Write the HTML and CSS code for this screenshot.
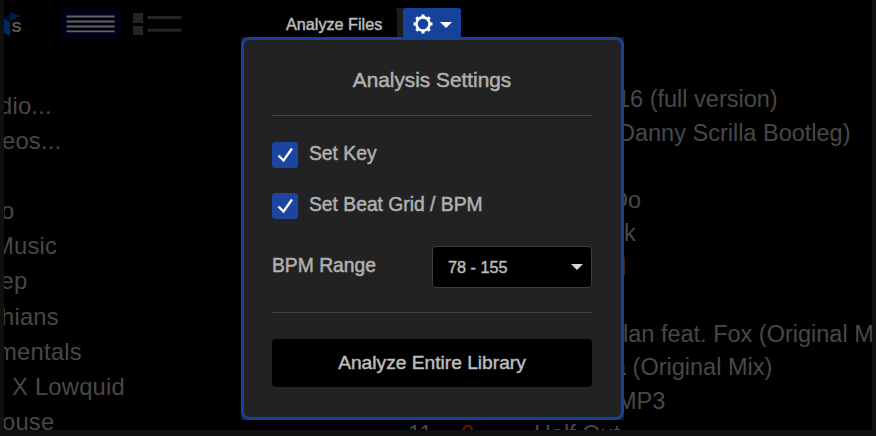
FILE: index.html
```
<!DOCTYPE html>
<html lang="en">
<head>
    <meta charset="UTF-8">
    <meta name="viewport" content="width=device-width, initial-scale=1.0">
    <title>Analysis Settings</title>
    <link rel="stylesheet" href="styles.css">
</head>
<body>
    <div class="screen">
        <div class="library">
            <div class="sidebar">
                <div class="view-bar">
                    <svg class="logo" width="17" height="26" viewBox="0 0 17 26">
                        <path d="M0 7L6 10V24L0 21Z" fill="#002a5e"/>
                        <path d="M0 5L6 3V9L0 6.500Z" fill="#000f28"/>
                        <path d="M6 0L16 4L11 7L6 9Z" fill="#001d48"/>
                        <text x="7.5" y="20" class="logo-text">S</text>
                    </svg>
                    <svg class="view-list" width="61" height="32" viewBox="0 0 61 32">
                        <rect width="61" height="32" rx="2" fill="#000015"/>
                        <path d="M6.500 8.500h48M6.500 13.500h48M6.500 18.500h48M6.500 23.300h48" stroke="#65655f" stroke-width="1.800"/>
                    </svg>
                    <svg class="view-detail" width="49" height="24" viewBox="0 0 49 24">
                        <path d="M0 1h10v10H0zM0 14h10v9H0z" fill="#242424"/>
                        <path d="M14.500 5.500h34M14.500 18.300h34" stroke="#242424" stroke-width="3"/>
                    </svg>
                </div>
                <ul class="folders">
                    <li class="audio">dio...</li>
                    <li class="videos">eos...</li>
                    <li></li>
                    <li class="folder-o">o</li>
                    <li class="music">Music</li>
                    <li class="folder-ep">ep</li>
                    <li class="hians">hians</li>
                    <li class="mentals">mentals</li>
                    <li class="lowquid">X Lowquid</li>
                    <li class="house">ouse</li>
                </ul>
            </div>
            <ul class="tracks">
                <li class="full">16 (full version)</li>
                <li class="danny">Danny Scrilla Bootleg)</li>
                <li></li>
                <li class="do">Do</li>
                <li class="track-k">k</li>
                <li class="track-d">d</li>
                <li></li>
                <li class="fox">lan feat. Fox (Original M</li>
                <li class="mix">a (Original Mix)</li>
                <li class="mp3">MP3</li>
                <li class="half"><span class="count">11</span><span class="key">8</span><span>Half Out</span></li>
            </ul>
        </div>

        <div class="analyze">
            <div class="tabs">
                <div class="tab-files">Analyze Files</div>
                <div class="tab-settings">
                    <svg width="20" height="20" viewBox="0 0 20 20">
                        <circle cx="10" cy="10" r="6.600" fill="none" stroke="#fff" stroke-width="2.600"/>
                        <path d="M10 .5v3M10 16.500v3M.5 10h3M16.500 10h3M3.300 3.300l2.100 2.100M14.600 14.600l2.100 2.100M16.700 3.300l-2.100 2.100M5.400 14.600l-2.100 2.100" stroke="#fff" stroke-width="3"/>
                    </svg>
                    <span class="arrow"></span>
                </div>
            </div>
            <div class="popover">
                <div class="panel">
                    <h2>Analysis Settings</h2>
                    <div class="check-row">
                        <svg class="check" width="26" height="26" viewBox="0 0 26 26"><path d="M6.500 13.500l5 5L20 6.500" fill="none" stroke="#fff" stroke-width="2.300"/></svg>
                        <span>Set Key</span>
                    </div>
                    <div class="check-row">
                        <svg class="check" width="26" height="26" viewBox="0 0 26 26"><path d="M6.500 13.500l5 5L20 6.500" fill="none" stroke="#fff" stroke-width="2.300"/></svg>
                        <span>Set Beat Grid / BPM</span>
                    </div>
                    <div class="range-row">
                        <span class="range-label">BPM Range</span>
                        <div class="select"><span>78 - 155</span><span class="arrow"></span></div>
                    </div>
                    <div class="analyze-button">Analyze Entire Library</div>
                </div>
            </div>
        </div>
    </div>
</body>
</html>
```
FILE: styles.css
```
* {
    box-sizing: border-box;
}
body {
    margin: 0;
    height: 436px;
    padding: 0 4px 6px;
    background: #101010;
    font-family: "Liberation Sans", Arial, sans-serif;
    overflow: hidden;
}
.screen {
    position: relative;
    height: 430px;
    background: #000;
    overflow: hidden;
}
.library {
    display: flex;
    height: 430px;
    color: #484848;
}
.sidebar {
    flex: none;
    width: 237px;
    overflow: hidden;
}
.view-bar {
    display: flex;
    align-items: flex-start;
    height: 88px;
    padding-top: 8px;
}
.logo {
    margin-top: 4px;
}
.logo-text {
    font-size: 15px;
    font-weight: bold;
    fill: #555e60;
}
.view-list {
    margin-left: 39px;
}
.view-detail {
    margin: 4px 0 0 12px;
}
ul {
    margin: 0;
    padding: 0;
    list-style: none;
    white-space: nowrap;
}
.folders {
    font-size: 23.8px;
    letter-spacing: 0.2px;
}
.folders li {
    height: 35.1px;
    line-height: 35.1px;
}
.audio { margin-left: -5px; }
.videos { margin-left: -2px; }
.folder-o { margin-left: -3px; }
.music { margin-left: -10px; }
.folder-ep { margin-left: -3.5px; }
.hians { margin-left: -3px; }
.mentals { margin-left: -7px; }
.lowquid { margin-left: 8px; }
.house { margin-left: -2px; }

.tracks {
    flex: 1;
    min-width: 0;
    padding-top: 83px;
    font-size: 23.5px;
}
.tracks li {
    height: 33.55px;
    line-height: 33.55px;
}
.full { padding-left: 376px; }
.danny { padding-left: 377px; }
.do { padding-left: 370px; }
.track-k { padding-left: 383px; }
.track-d { padding-left: 372px; }
.fox { padding-left: 382px; }
.mix { padding-left: 372px; }
.mp3 { padding-left: 376px; }
.half {
    display: flex;
    padding-left: 167px;
}
.count {
    width: 53px;
}
.key {
    width: 73px;
    color: #6b1608;
}

/* settings dropdown over the library */
.analyze {
    position: absolute;
    top: 8px;
    left: 237px;
    width: 383px;
    color: #b0b0b0;
    -webkit-text-stroke: 0.5px #b0b0b0;
}
.tabs {
    display: flex;
    width: 188px;
    height: 29px;
    margin-left: 32px;
    background: #1c1c1c;
    border-radius: 3px 3px 0 0;
}
.tab-files {
    width: 124px;
    margin-right: 6px;
    padding-left: 13px;
    background: #000;
    border-radius: 3px 3px 0 0;
    font-size: 16.2px;
    line-height: 33px;
    white-space: nowrap;
    color: #c4c4c4;
}
.tab-settings {
    display: flex;
    align-items: center;
    gap: 7px;
    width: 58px;
    padding: 3px 0 0 10px;
    background: #17429c;
    border-radius: 3px 3px 0 0;
}
.arrow {
    border: 6px solid transparent;
    border-top-color: #d8d8d8;
    border-bottom: 0;
}
.tab-settings .arrow {
    margin-top: 2px;
    border-top-color: #fff;
}
.popover {
    background: #1c1c1c;
}
.panel {
    height: 383px;
    padding: 0 29px 0 28px;
    border: 3px solid #17429c;
    border-radius: 8px;
    background: #222;
}
h2 {
    height: 76px;
    margin: 0 0 26px;
    border-bottom: 1px solid #424242;
    font-size: 20.8px;
    font-weight: normal;
    line-height: 79px;
    text-align: center;
}
.check-row {
    display: flex;
    gap: 11px;
    height: 26px;
    margin-bottom: 25px;
    font-size: 19.3px;
    line-height: 24px;
}
.check {
    background: #1b459e;
    border-radius: 3px;
}
.range-row {
    display: flex;
    justify-content: space-between;
    height: 69px;
    margin-bottom: 26px;
    border-bottom: 1px solid #424242;
    font-size: 19.3px;
}
.range-label {
    line-height: 43px;
}
.select {
    display: flex;
    align-items: center;
    justify-content: space-between;
    width: 160px;
    height: 42px;
    margin-top: 2px;
    padding: 0 8px 0 15px;
    border: 1px solid #3d3d3d;
    border-radius: 4px;
    background: #000;
    color: #c4c4c4;
    font-size: 16.2px;
}
.analyze-button {
    height: 48px;
    border-radius: 4px;
    background: #000;
    color: #c4c4c4;
    font-size: 19.2px;
    line-height: 48px;
    text-align: center;
}
```
